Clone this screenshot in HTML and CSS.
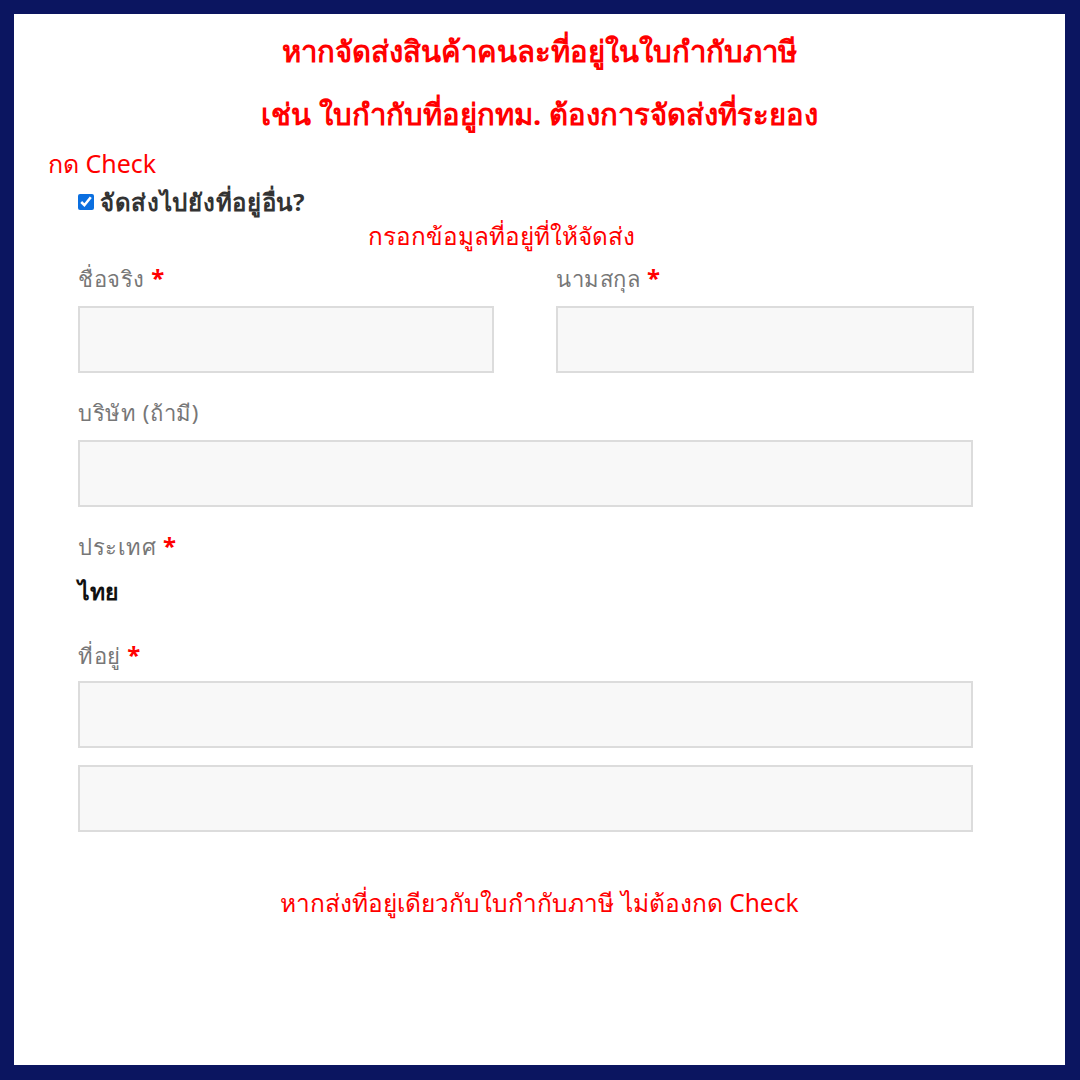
FILE: index.html
```html
<!DOCTYPE html>
<html lang="th">
<head>
    <meta charset="UTF-8">
    <meta name="viewport" content="width=device-width, initial-scale=1.0">
    <title>จัดส่งไปยังที่อยู่อื่น</title>
    <link rel="stylesheet" href="styles.css">
</head>
<body>
    <div class="frame">
        <div class="headline">
            <p>หากจัดส่งสินค้าคนละที่อยู่ในใบกำกับภาษี</p>
            <p>เช่น ใบกำกับที่อยู่กทม. ต้องการจัดส่งที่ระยอง</p>
        </div>
        <p class="hint">กด Check</p>
        <label class="ship-toggle">
            <input type="checkbox" checked>
            <span>จัดส่งไปยังที่อยู่อื่น?</span>
        </label>
        <p class="sub-hint">กรอกข้อมูลที่อยู่ที่ให้จัดส่ง</p>

        <form class="shipping-form">
            <div class="row two-col">
                <div class="field">
                    <label>ชื่อจริง <span class="req">*</span></label>
                    <input type="text">
                </div>
                <div class="field">
                    <label>นามสกุล <span class="req">*</span></label>
                    <input type="text">
                </div>
            </div>
            <div class="field">
                <label>บริษัท (ถ้ามี)</label>
                <input type="text">
            </div>
            <div class="field">
                <label>ประเทศ <span class="req">*</span></label>
                <strong class="country">ไทย</strong>
            </div>
            <div class="field address">
                <label>ที่อยู่ <span class="req">*</span></label>
                <input type="text">
                <input type="text" class="line-two">
            </div>
        </form>

        <p class="footer-hint">หากส่งที่อยู่เดียวกับใบกำกับภาษี ไม่ต้องกด Check</p>
    </div>
</body>
</html>
```

FILE: styles.css
```css
body {
    margin: 0;
    background-color: #0b1560;
    font-family: 'Noto Sans', 'Liberation Sans', sans-serif;
}

.frame {
    width: 1080px;
    height: 1080px;
    box-sizing: border-box;
    border-style: solid;
    border-color: #0b1560;
    border-width: 14px 15px 15px 14px;
    background-color: white;
    padding-top: 6px;
}

p {
    margin: 0;
}

.headline {
    color: red;
    font-size: 29.3px;
    font-weight: bold;
    text-align: center;
    line-height: 63px;
}

.hint {
    color: red;
    font-size: 25px;
    line-height: 28px;
    margin-top: 3px;
    padding-left: 34px;
}

.ship-toggle {
    display: flex;
    align-items: center;
    gap: 6px;
    padding-left: 64px;
    height: 28px;
    margin-top: 11px;
    font-size: 24px;
    letter-spacing: 0.7px;
    font-weight: bold;
    color: #333;
}

.ship-toggle input {
    width: 16px;
    height: 16px;
    margin: 0;
    accent-color: #0b6fe0;
}

.sub-hint {
    color: red;
    font-size: 24.3px;
    line-height: 28px;
    margin-top: 6px;
    padding-left: 354px;
}

.shipping-form {
    padding: 14px 92px 0 64px;
    display: flex;
    flex-direction: column;
    gap: 25px;
}

.two-col {
    display: grid;
    grid-template-columns: 416px 418px;
    column-gap: 62px;
}

.field {
    display: flex;
    flex-direction: column;
}

.field label {
    font-size: 22px;
    letter-spacing: 0.6px;
    line-height: 28px;
    color: #777;
    margin-bottom: 14px;
}

.req {
    color: red;
    font-weight: bold;
    font-size: 24px;
}

.field input {
    height: 67px;
    box-sizing: border-box;
    margin: 0;
    border: 2px solid #dcdcdc;
    background-color: #f8f8f8;
}

.country {
    font-size: 23px;
    line-height: 28px;
    color: #111;
    margin-top: 3px;
}

.address {
    margin-top: 11px;
}

.address label {
    margin-bottom: 12px;
}

.address .line-two {
    margin-top: 17px;
}

.footer-hint {
    color: red;
    font-size: 24.5px;
    line-height: 28px;
    text-align: center;
    margin-top: 57px;
}
```
